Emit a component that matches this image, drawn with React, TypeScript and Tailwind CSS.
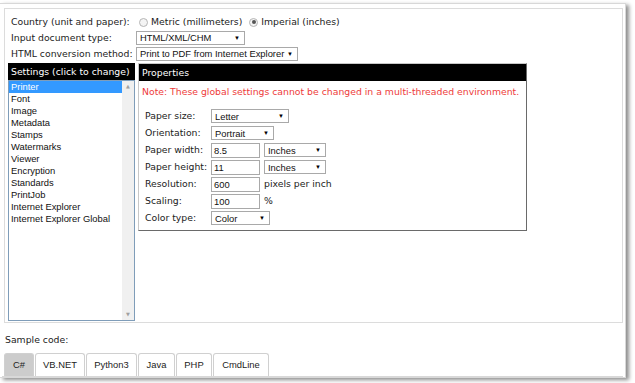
import React from "react";

const V = "font-['DejaVu_Sans',Verdana,sans-serif]";
const A = "font-['Liberation_Sans',Arial,sans-serif]";

function Select({ w, text }: { w: number; text: string }) {
  return (
    <div
      className={`flex items-center justify-between h-[14px] border border-[#a9a9a9] bg-white pl-[3px] pr-[4px] text-[9.4px] text-[#111] ${A} leading-none`}
      style={{ width: w }}
    >
      <span>{text}</span>
      <span className="text-[6px] text-black">▼</span>
    </div>
  );
}

function Input({ text }: { text: string }) {
  return (
    <div
      className={`flex items-center w-[49px] h-[15px] border border-[#a9a9a9] bg-white pl-[2px] text-[9.4px] text-[#111] ${A} leading-none`}
    >
      {text}
    </div>
  );
}

function Radio({ checked }: { checked?: boolean }) {
  return (
    <span className="inline-flex items-center justify-center w-[9px] h-[9px] rounded-full border border-[#b5b5b5] bg-[#f4f4f4]">
      {checked && <span className="w-[4px] h-[4px] rounded-full bg-[#555]" />}
    </span>
  );
}

const items = [
  "Printer",
  "Font",
  "Image",
  "Metadata",
  "Stamps",
  "Watermarks",
  "Viewer",
  "Encryption",
  "Standards",
  "PrintJob",
  "Internet Explorer",
  "Internet Explorer Global",
];

function Row({ label, children }: { label: string; children: React.ReactNode }) {
  return (
    <div className="flex items-center h-[17px]">
      <div className="w-[66px] text-[9.3px] text-[#222] whitespace-nowrap">{label}</div>
      <div className="flex items-center gap-[4px] text-[9.3px] text-[#222]">{children}</div>
    </div>
  );
}

export default function App() {
  return (
    <div className={`w-[635px] h-[383px] bg-white overflow-hidden relative ${V}`}>
      <div className="mt-[3px] w-[626px] h-[375px] border-t border-r border-b border-[#d8d8d8] shadow-[3px_2px_4px_rgba(0,0,0,0.45)] bg-white flex flex-col">
        {/* top box */}
        <div className="ml-[4px] mt-[4px] w-[619px] h-[316px] border border-[#dcdcdc] px-[2px] pt-[5px]">
          <div className="pl-[4px] flex flex-col text-[9.3px] text-[#222]">
            <div className="flex items-center h-[16px]">
              <div className="w-[128px] whitespace-nowrap">Country (unit and paper):</div>
              <div className="flex items-center gap-[3px] whitespace-nowrap">
                <Radio />
                <span className="mr-[4px]">Metric (millimeters)</span>
                <Radio checked />
                <span>Imperial (inches)</span>
              </div>
            </div>
            <div className="flex items-center h-[16px]">
              <div className="w-[125px] whitespace-nowrap">Input document type:</div>
              <Select w={109} text="HTML/XML/CHM" />
            </div>
            <div className="flex items-center h-[16px]">
              <div className="w-[125px] whitespace-nowrap">HTML conversion method:</div>
              <Select w={162} text="Print to PDF from Internet Explorer" />
            </div>
          </div>
          <div className="flex gap-[3px] mt-[1px] ml-[1px]">
            {/* settings */}
            <div className="w-[127px] flex flex-col">
              <div className="h-[17px] bg-black text-white text-[9.3px] flex items-center pl-[3px] whitespace-nowrap">
                Settings (click to change)
              </div>
              <div className="h-[241px] border border-[#7f9db9] flex bg-white">
                <div className={`flex-1 flex flex-col ${A} text-[9.4px] text-[#111] leading-[12px]`}>
                  {items.map((it, i) => (
                    <div
                      key={it}
                      className={`pl-[2px] h-[12px] ${i === 0 ? "bg-[#3399ff] text-white" : ""}`}
                    >
                      {it}
                    </div>
                  ))}
                </div>
                <div className="w-[12px] bg-[#f0f0f0] flex flex-col items-center justify-between py-[3px]">
                  <span className="text-[5px] text-[#a0a0a0] leading-none">▲</span>
                  <span className="text-[5px] text-[#a0a0a0] leading-none">▼</span>
                </div>
              </div>
            </div>
            {/* properties */}
            <div className="w-[389px] h-[168px] border-l border-t border-[#c8c8c8] border-r-[1px] border-b-[1px] border-r-[#6a6a6a] border-b-[#6a6a6a] flex flex-col">
              <div className="h-[17px] bg-black text-white text-[9.3px] flex items-center pl-[3px]">
                Properties
              </div>
              <div className="pl-[3px] pt-[4px] text-[9.3px] text-[#ee3b3b] whitespace-nowrap">
                Note: These global settings cannot be changed in a multi-threaded environment.
              </div>
              <div className="pl-[6px] pt-[9px] flex flex-col">
                <Row label="Paper size:">
                  <Select w={78} text="Letter" />
                </Row>
                <Row label="Orientation:">
                  <Select w={63} text="Portrait" />
                </Row>
                <Row label="Paper width:">
                  <Input text="8.5" />
                  <Select w={62} text="Inches" />
                </Row>
                <Row label="Paper height:">
                  <Input text="11" />
                  <Select w={62} text="Inches" />
                </Row>
                <Row label="Resolution:">
                  <Input text="600" />
                  <span>pixels per inch</span>
                </Row>
                <Row label="Scaling:">
                  <Input text="100" />
                  <span>%</span>
                </Row>
                <Row label="Color type:">
                  <Select w={59} text="Color" />
                </Row>
              </div>
            </div>
          </div>
        </div>
        <div className="ml-[5px] mt-[10px] text-[9.3px] text-[#222]">Sample code:</div>
        <div className={`ml-[4px] mt-[6px] flex ${A} text-[9.4px] text-[#222]`}>
          {["C#", "VB.NET", "Python3", "Java", "PHP", "CmdLine"].map((t, i) => (
            <div
              key={t}
              className={`h-[23px] flex items-center justify-center border border-b-0 border-[#d0d0d0] rounded-t-[3px] mr-[1px] ${
                i === 0 ? "bg-[#cccccc]" : "bg-white"
              }`}
              style={{ width: [30, 50, 51, 37, 36, 56][i] }}
            >
              {t}
            </div>
          ))}
        </div>
        <div className="h-[1px] bg-[#d8d8d8] ml-[2px] mr-[2px]" />
      </div>
    </div>
  );
}
